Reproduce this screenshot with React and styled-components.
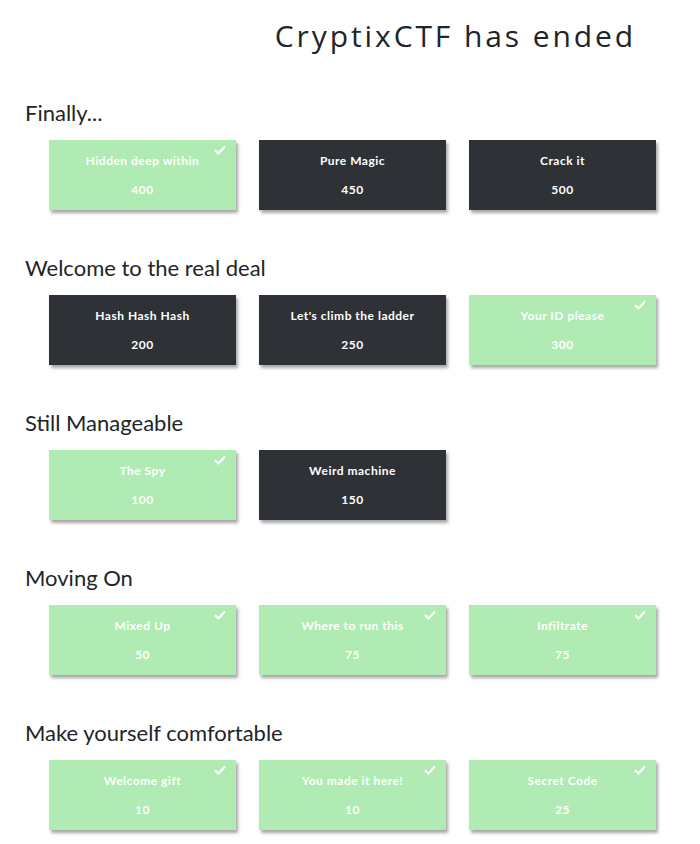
import React from 'react';
import styled, { createGlobalStyle } from 'styled-components';

const GlobalStyle = createGlobalStyle`
  body {
    margin: 0;
    background: #ffffff;
    font-family: Lato, "Open Sans", sans-serif;
  }
`;

const Page = styled.div`
  width: 700px;
  padding-bottom: 16px;
`;

const Header = styled.h1`
  margin: 0;
  padding: 18px 64px 0 0;
  text-align: right;
  font-family: "Open Sans", "DejaVu Sans", sans-serif;
  font-weight: 400;
  font-size: 30px;
  line-height: 36px;
  letter-spacing: 2.9px;
  color: #222528;
`;

const Category = styled.section`
  margin-top: ${({ $first }) => ($first ? '46px' : '45px')};
`;

const CategoryTitle = styled.h2`
  margin: 0 0 14px 25px;
  font-family: Lato, sans-serif;
  font-weight: 400;
  font-size: 22px;
  line-height: 26px;
  color: #222528;
`;

const Grid = styled.div`
  display: grid;
  grid-template-columns: repeat(3, 187px);
  column-gap: 23px;
  margin-left: 49px;
`;

const Card = styled.div`
  position: relative;
  height: 70px;
  display: flex;
  flex-direction: column;
  align-items: center;
  padding-top: 14px;
  box-sizing: border-box;
  gap: 15px;
  background: ${({ $solved }) => ($solved ? '#b0ebb4' : '#2e3236')};
  box-shadow: 2px 3px 3px rgba(0, 0, 0, 0.35);
  color: #ffffff;
  font-family: Lato, sans-serif;
  font-weight: 700;
  font-size: 12px;
  line-height: 14px;
  letter-spacing: 0.5px;
`;

const Check = styled.svg`
  position: absolute;
  top: 5px;
  right: 10px;
  width: 12px;
  height: 10px;
`;

const categories = [
  {
    name: 'Finally...',
    challenges: [
      { name: 'Hidden deep within', points: 400, solved: true },
      { name: 'Pure Magic', points: 450 },
      { name: 'Crack it', points: 500 },
    ],
  },
  {
    name: 'Welcome to the real deal',
    challenges: [
      { name: 'Hash Hash Hash', points: 200 },
      { name: "Let's climb the ladder", points: 250 },
      { name: 'Your ID please', points: 300, solved: true },
    ],
  },
  {
    name: 'Still Manageable',
    challenges: [
      { name: 'The Spy', points: 100, solved: true },
      { name: 'Weird machine', points: 150 },
    ],
  },
  {
    name: 'Moving On',
    challenges: [
      { name: 'Mixed Up', points: 50, solved: true },
      { name: 'Where to run this', points: 75, solved: true },
      { name: 'Infiltrate', points: 75, solved: true },
    ],
  },
  {
    name: 'Make yourself comfortable',
    challenges: [
      { name: 'Welcome gift', points: 10, solved: true },
      { name: 'You made it here!', points: 10, solved: true },
      { name: 'Secret Code', points: 25, solved: true },
    ],
  },
];

const App = () => (
  <Page>
    <GlobalStyle />
    <Header>CryptixCTF has ended</Header>
    {categories.map((cat, i) => (
      <Category key={cat.name} $first={i === 0}>
        <CategoryTitle>{cat.name}</CategoryTitle>
        <Grid>
          {cat.challenges.map((ch) => (
            <Card key={ch.name} $solved={ch.solved}>
              {ch.solved && (
                <Check viewBox="0 0 12 10">
                  <path d="M1 5.2 L4.4 8.4 L11 1.6" fill="none" stroke="#ffffff" strokeWidth="2.2" />
                </Check>
              )}
              <span>{ch.name}</span>
              <span>{ch.points}</span>
            </Card>
          ))}
        </Grid>
      </Category>
    ))}
  </Page>
);

export default App;
